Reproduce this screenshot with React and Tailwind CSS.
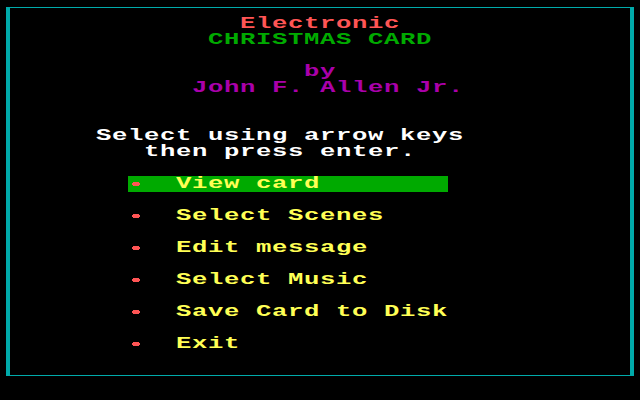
import React from 'react'

// one text cell = 16x16, screen = 40 cols x 25 rows
const Txt = ({ color, children }) => (
  <span
    className={`block h-4 origin-left scale-x-[1.6] whitespace-pre font-['Liberation_Mono',monospace] text-[16px] leading-4 font-bold tracking-[0.4px] ${color}`}
  >
    {children}
  </span>
)

const Bullet = () => (
  <svg width="8" height="4" viewBox="0 0 8 4" className="ml-1 mt-[6px] block">
    <rect x="1" y="0" width="6" height="1" fill="#FF5555" />
    <rect x="0" y="1" width="8" height="2" fill="#FF5555" />
    <rect x="1" y="3" width="6" height="1" fill="#FF5555" />
  </svg>
)

const Line = ({ pad, children }) => <div className={`flex h-4 leading-4 ${pad}`}>{children}</div>

const MenuItem = ({ label, selected }) => (
  <Line pad="pl-[118px]">
    <div className={`flex h-4 w-[320px] ${selected ? 'bg-[#00AA00]' : ''}`}>
      <div className="w-12 h-4 shrink-0">
        <Bullet />
      </div>
      <Txt color="text-[#FFFF55]">{label}</Txt>
    </div>
  </Line>
)

const Blank = () => <div className="h-4" />

export default function App() {
  const menu = ['View card', 'Select Scenes', 'Edit message', 'Select Music', 'Save Card to Disk', 'Exit']

  return (
    <div className="w-[640px] h-[400px] bg-black overflow-hidden pt-[7px] pl-[6px]">
      <div className="w-[628px] h-[369px] border-x-4 border-y border-[#00AAAA] pt-2">
        {/* title block */}
        <Line pad="pl-[230px]"><Txt color="text-[#FF5555]">Electronic</Txt></Line>
        <Line pad="pl-[198px]"><Txt color="text-[#00AA00]">CHRISTMAS CARD</Txt></Line>
        <Blank />
        <Line pad="pl-[294px]"><Txt color="text-[#AA00AA]">by</Txt></Line>
        <Line pad="pl-[182px]"><Txt color="text-[#AA00AA]">John F. Allen Jr.</Txt></Line>
        <Blank />
        <Blank />

        {/* instructions */}
        <Line pad="pl-[86px]"><Txt color="text-white">Select using arrow keys</Txt></Line>
        <Line pad="pl-[134px]"><Txt color="text-white">then press enter.</Txt></Line>
        <Blank />

        {/* menu */}
        {menu.map((m, i) => (
          <div key={m}>
            {i > 0 && <Blank />}
            <MenuItem label={m} selected={i === 0} />
          </div>
        ))}
      </div>
    </div>
  )
}
